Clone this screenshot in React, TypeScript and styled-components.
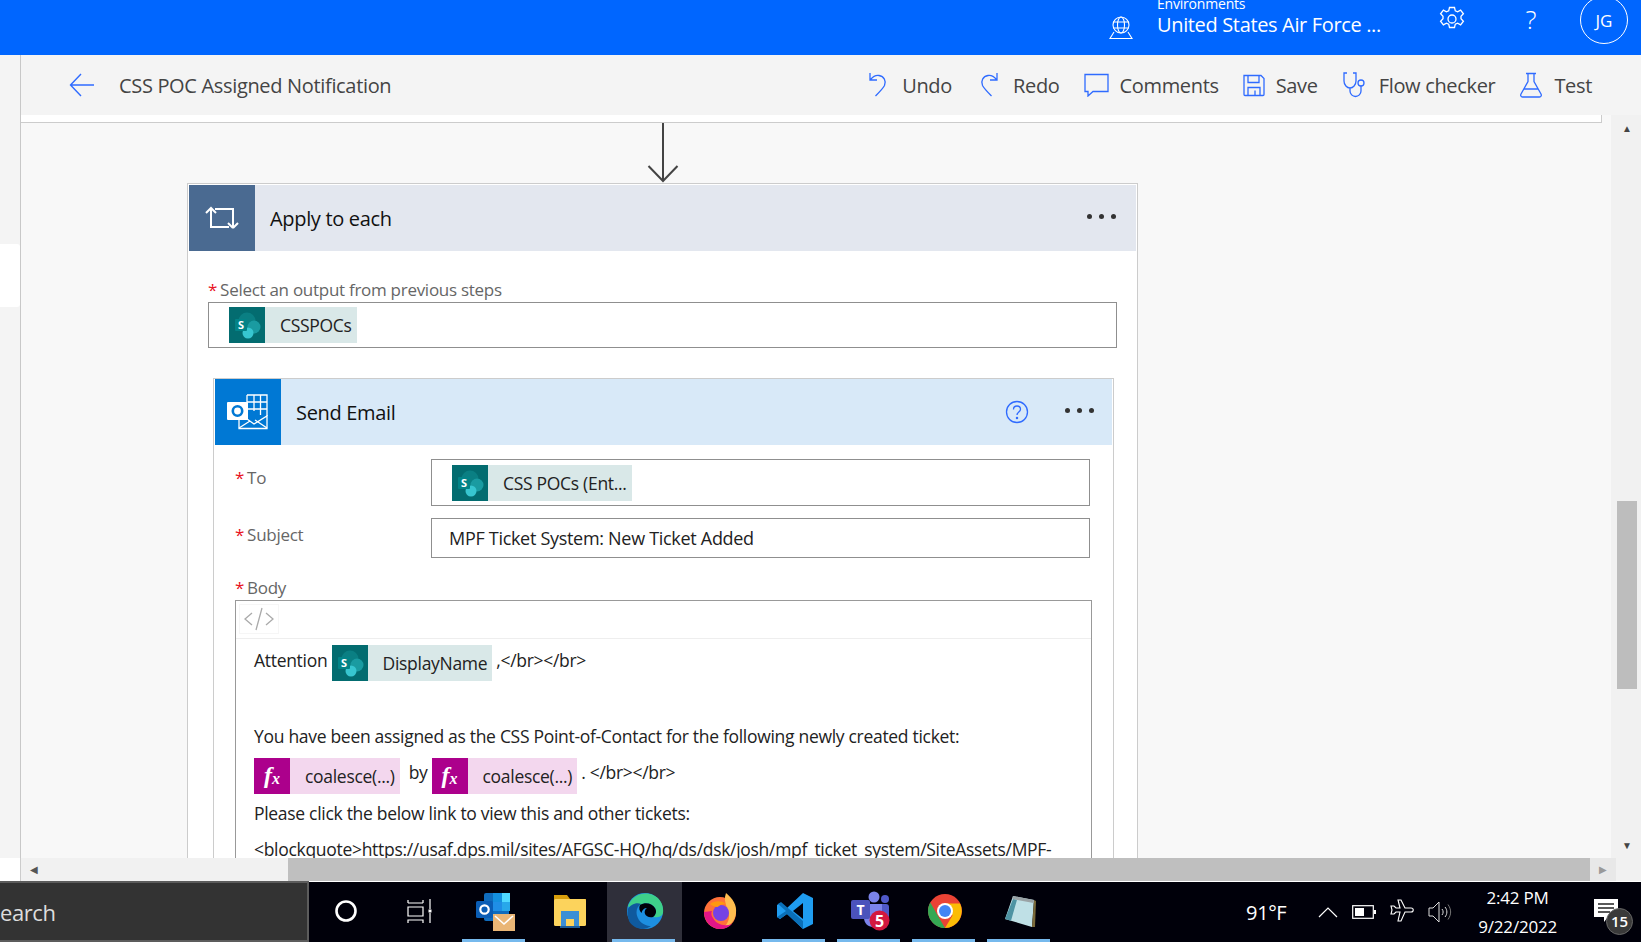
import React from 'react';
import styled, { createGlobalStyle } from 'styled-components';

const GlobalStyle = createGlobalStyle`
  html, body {
    margin: 0;
    padding: 0;
    overflow: hidden;
  }
  body {
    font-family: "Open Sans", "Noto Sans", sans-serif;
  }
  * {
    box-sizing: border-box;
  }
`;

const SharePointIcon = () => (
  <svg width="36" height="36" viewBox="0 0 36 36">
    <rect width="36" height="36" fill="#036c70" />
    <circle cx="18" cy="14" r="8.5" fill="#0a7f83" />
    <circle cx="25" cy="20" r="6.5" fill="#1a9ba1" />
    <circle cx="19" cy="26" r="5.5" fill="#37c6d0" />
    <rect x="6" y="12" width="12" height="12" rx="1" fill="#038387" />
    <text x="9" y="22" fontSize="11" fontWeight="700" fill="#fff" fontFamily="Open Sans">S</text>
  </svg>
);

const FxIcon = () => (
  <FxBox>
    f<sub>x</sub>
  </FxBox>
);

const TokenBox = ({ kind, children, wide }: { kind: 'sp' | 'fx'; children: React.ReactNode; wide?: boolean }) => (
  <Token $kind={kind}>
    {kind === 'sp' ? <SharePointIcon /> : <FxIcon />}
    <TokenLabel $wide={wide}>{children}</TokenLabel>
  </Token>
);

const Stroke = ({ w = 26, h = 26, children, view = '0 0 26 26' }: { w?: number; h?: number; view?: string; children: React.ReactNode }) => (
  <svg width={w} height={h} viewBox={view} fill="none" stroke="#2f6bff" strokeWidth="1.3">
    {children}
  </svg>
);

const toolbarItems: { label: string; icon: React.ReactNode }[] = [
  {
    label: 'Undo',
    icon: (
      <Stroke>
        <path d="M5 1v7h7M5.5 7.5C8 4.500 11 3 14 3.500c5 .8 7.500 5.500 5.500 10-1.500 3-6 7.500-9 10.500" />
      </Stroke>
    ),
  },
  {
    label: 'Redo',
    icon: (
      <Stroke>
        <path d="M21 1v7h-7M20.500 7.500C18 4.500 15 3 12 3.500c-5 .8-7.500 5.500-5.500 10 1.500 3 6 7.500 9 10.500" />
      </Stroke>
    ),
  },
  {
    label: 'Comments',
    icon: (
      <Stroke w={25} h={24} view="0 0 25 24">
        <path d="M1 1.500h23v17H9l-5 4.500v-4.500H1z" />
      </Stroke>
    ),
  },
  {
    label: 'Save',
    icon: (
      <Stroke w={22} h={23} view="0 0 22 23">
        <path d="M1 1.500h17l3 3v16a1 1 0 0 1-1 1H2a1 1 0 0 1-1-1zM5 1.500v7h11v-7M5 21.500v-8h12v8M12 16.500v5" />
      </Stroke>
    ),
  },
  {
    label: 'Flow checker',
    icon: (
      <Stroke w={26} h={26}>
        <path d="M5 1H2v8c0 4 3 7 6 7s6-3 6-7V1h-3M8 16v3c0 3 2.500 5.500 5.500 5.500S19 22 19 19v-5" />
        <circle cx="19" cy="11" r="3" />
      </Stroke>
    ),
  },
  {
    label: 'Test',
    icon: (
      <Stroke w={24} h={26} view="0 0 24 26">
        <path d="M7 1.500h10M9 1.500v8L2 22c-.8 1.500 0 3 1.500 3h17c1.500 0 2.300-1.500 1.500-3L15 9.500v-8M5 17h14" />
      </Stroke>
    ),
  },
];

const taskApps: { key: string; active?: boolean; lit?: boolean; icon: React.ReactNode }[] = [
  {
    key: 'cortana',
    icon: (
      <svg width="24" height="24" viewBox="0 0 24 24">
        <circle cx="12" cy="12" r="9.500" fill="none" stroke="#fff" strokeWidth="2.600" />
      </svg>
    ),
  },
  {
    key: 'taskview',
    icon: (
      <svg width="26" height="24" viewBox="0 0 26 24" fill="none" stroke="#fff" strokeWidth="1.200">
        <path d="M1 4V1M16 1v3M1 4h15M1 8h15v9H1zM1 24v-3h15v3M23 0v10M23 14v10" />
        <rect x="21.500" y="10.500" width="3" height="3" fill="#fff" stroke="none" />
      </svg>
    ),
  },
  {
    key: 'outlook',
    lit: true,
    icon: (
      <svg width="40" height="40" viewBox="0 0 40 40">
        <rect x="9" y="2" width="25" height="28" rx="2" fill="#0f6cbd" />
        <rect x="18" y="2" width="9" height="9" fill="#1490df" />
        <rect x="27" y="2" width="8" height="9" fill="#50d9ff" />
        <rect x="18" y="11" width="9" height="9" fill="#1f8ee6" />
        <rect x="27" y="11" width="8" height="9" fill="#28a8ea" />
        <rect x="1" y="10" width="17" height="17" rx="1.500" fill="#0a5db5" />
        <circle cx="9.500" cy="18.500" r="4.200" fill="none" stroke="#fff" strokeWidth="2.200" />
        <rect x="18" y="23" width="22" height="17" fill="#eab676" />
        <path d="M20 25l9 8 9-8" fill="none" stroke="#fff" strokeWidth="1.600" />
      </svg>
    ),
  },
  {
    key: 'explorer',
    icon: (
      <svg width="34" height="36" viewBox="0 0 34 36">
        <path d="M1 2h13l3 4h16v26H1z" fill="#d89e0c" />
        <rect x="1" y="6" width="32" height="27" rx="1.500" fill="#fcd35c" />
        <path d="M8 18h18v15h-5v-7h-8v7H8z" fill="#3b8fd6" />
        <rect x="7" y="33" width="20" height="2" fill="#1c5c96" />
      </svg>
    ),
  },
  {
    key: 'edge',
    active: true,
    lit: true,
    icon: (
      <svg width="38" height="38" viewBox="0 0 38 38">
        <circle cx="19" cy="19" r="18" fill="#1d8fe0" />
        <path d="M2 14C6 3 18-1 27 3c7 3 11 10 10 18-1 4-6 5-10 4 3-2 4-6 2-9-3-5-10-6-15-3-5 2-9 5-12 1z" fill="#3ed08a" />
        <path d="M2 17c2-4 8-7 13-5-5 3-6 10-2 16 3 4 8 6 12 6-8 6-18 2-22-5-1-4-2-8-1-12z" fill="#0f5a9e" />
        <path d="M14 13c5-3 12-2 15 3 2 3 1 7-2 9-4 1-7-1-8-3-1-2 0-5 2-6-3 0-5 2-5.500 5-2-2-3-5-1.500-8z" fill="#000008" />
      </svg>
    ),
  },
  {
    key: 'firefox',
    icon: (
      <svg width="36" height="38" viewBox="0 0 36 38">
        <circle cx="18" cy="21" r="16" fill="#ff7139" />
        <path d="M24 1c7 6 11 12 10 20-1 8-6 13-13 15 6-5 8-12 4-20-2-5-3-10-1-15z" fill="#ffbd4f" />
        <path d="M2 20c0 9 7 17 16 17 5 0 9-2 12-5-8 3-16 0-19-6-2-3-2-5-1-7z" fill="#e31587" />
        <circle cx="19" cy="21" r="8" fill="#7542e5" />
        <path d="M8 12c4-3 11-4 16 0-3 0-7 1-8 3-3 0-6-1-8-3z" fill="#ff980e" />
      </svg>
    ),
  },
  {
    key: 'vscode',
    lit: true,
    icon: (
      <svg width="38" height="38" viewBox="0 0 38 38">
        <path d="M27 1l10 5v26l-10 5-16-15-7 5-3-2v-12l3-2 7 5zM27 11l-10 8 10 8z" fill="#1f9cf0" fillRule="evenodd" />
        <path d="M2 12l3-2 22 19v8L11 22l-7 5-3-2 9-6z" fill="#0a6fb8" />
      </svg>
    ),
  },
  {
    key: 'teams',
    lit: true,
    icon: (
      <svg width="40" height="40" viewBox="0 0 40 40">
        <circle cx="24" cy="6" r="5.500" fill="#7b83eb" />
        <circle cx="35" cy="8" r="4" fill="#5059c9" />
        <rect x="24" y="13" width="15" height="15" rx="3" fill="#5059c9" />
        <path d="M14 13h18v14c0 6-4 9-9 9s-9-4-9-9z" fill="#7b83eb" />
        <rect x="1" y="9" width="19" height="19" rx="2" fill="#4b53bc" />
        <text x="10.500" y="24" fontSize="14" fontWeight="700" fill="#fff" textAnchor="middle" fontFamily="Open Sans">T</text>
        <circle cx="29.500" cy="29.500" r="10" fill="#d3183f" />
        <text x="29.500" y="35.500" fontSize="16" fontWeight="700" fill="#fff" textAnchor="middle" fontFamily="Open Sans">5</text>
      </svg>
    ),
  },
  {
    key: 'chrome',
    lit: true,
    icon: (
      <svg width="34" height="34" viewBox="0 0 34 34">
        <circle cx="17" cy="17" r="17" fill="#ea4335" />
        <path d="M2.300 8.500L10 22l7 12a17 17 0 0 1-14.700-25.500z" fill="#34a853" />
        <path d="M17 9.500h15a17 17 0 0 1-15 24.500l7.500-12.500z" fill="#fbbc05" />
        <circle cx="17" cy="17" r="8" fill="#fff" />
        <circle cx="17" cy="17" r="6" fill="#4285f4" />
      </svg>
    ),
  },
  {
    key: 'notes',
    lit: true,
    icon: (
      <svg width="34" height="34" viewBox="0 0 34 34">
        <path d="M10 2l21 4-2 27-27-8z" fill="#bfe0e6" />
        <path d="M2 25l8-20 4 .800-6 21z" fill="#4e93a3" />
        <path d="M29 33l2-27 2 1-1 26z" fill="#7a6a3a" />
        <path d="M10 2l21 4-.500 3-21-4z" fill="#9aa3a6" />
      </svg>
    ),
  },
];

export default function App() {
  return (
    <Page>
      <GlobalStyle />
      <TopBar>
        <svg width="24" height="24" viewBox="0 0 24 24" fill="none" stroke="#fff" strokeWidth="1.100">
          <circle cx="12" cy="9" r="8" />
          <ellipse cx="12" cy="9" rx="3.500" ry="8" />
          <path d="M4 6h16M4 12h16M5 16L1 22.500h22L19 16" />
        </svg>
        <EnvBlock>
          <EnvSmall>Environments</EnvSmall>
          <EnvName>United States Air Force ...</EnvName>
        </EnvBlock>
        <TopIcon>
          <svg width="26" height="26" viewBox="0 0 26 26" fill="none" stroke="#fff" strokeWidth="1.300">
            <path d="M10.500 1.500h5l.8 3.300 2.300 1 3-1.700 2.800 3.700-2.400 2.400v2.600l2.400 2.400-2.800 3.700-3-1.700-2.300 1-.8 3.300h-5l-.8-3.300-2.300-1-3 1.700-2.800-3.700 2.400-2.400v-2.600L1.600 7.800l2.800-3.700 3 1.700 2.300-1z" />
            <circle cx="13" cy="13" r="4" />
          </svg>
        </TopIcon>
        <HelpMark>?</HelpMark>
        <Avatar>JG</Avatar>
      </TopBar>

      <Middle>
        <SideStrip>
          <SideBlock />
        </SideStrip>
        <Workspace>
          <Toolbar>
            <BackGroup>
              <svg width="26" height="24" viewBox="0 0 26 24" fill="none" stroke="#2f6bff" strokeWidth="1.400">
                <path d="M25 12H2M12 1L1.500 12 12 23" />
              </svg>
              <FlowTitle>CSS POC Assigned Notification</FlowTitle>
            </BackGroup>
            <Actions>
              {toolbarItems.map((item) => (
                <Action key={item.label}>
                  {item.icon}
                  <span>{item.label}</span>
                </Action>
              ))}
            </Actions>
          </Toolbar>

          <Viewport>
            <Canvas>
              <TopStrip />
              <FlowColumn>
                <Connector>
                  <svg width="32" height="60" viewBox="0 0 32 60" fill="none" stroke="#444" strokeWidth="2">
                    <path d="M16 0v58M1.500 43L16 58 30.500 43" />
                  </svg>
                </Connector>
                <ApplyCard>
                  <CardHeader $bg="#e3e7ef">
                    <CardIcon $bg="#4a6a91">
                      <svg width="34" height="24" viewBox="0 0 34 24" fill="none" stroke="#fff" strokeWidth="2">
                        <path d="M1 7l5-5 5 5M6 2.500V21h18M28 22l5-5M28 22l-5-5M28 21V3H10" />
                      </svg>
                    </CardIcon>
                    <CardTitle>Apply to each</CardTitle>
                    <Dots />
                  </CardHeader>
                  <ApplyBody>
                    <FieldLabel>
                      <Req>*</Req>Select an output from previous steps
                    </FieldLabel>
                    <InputBox $height={46} $padLeft={20}>
                      <TokenBox kind="sp">CSSPOCs</TokenBox>
                    </InputBox>

                    <SendCard>
                      <CardHeader $bg="#d8e9f8">
                        <CardIcon $bg="#0078d4">
                          <svg width="42" height="38" viewBox="0 0 42 38" fill="none" stroke="#fff" strokeWidth="1.300">
                            <path d="M20 2h20v21M20 2v14M27 2v16M33.500 2v20M20 9h20M20 16h20" />
                            <path d="M12 26v9.500h28V23L27 31l-7-5" />
                            <path d="M12 35l11-7M40 35l-12-8" />
                            <rect x="0" y="9" width="21" height="18" rx="1" fill="#fff" stroke="none" />
                            <circle cx="10.500" cy="18" r="4.700" stroke="#0078d4" strokeWidth="2.600" />
                          </svg>
                        </CardIcon>
                        <CardTitle>Send Email</CardTitle>
                        <svg width="24" height="24" viewBox="0 0 24 24" fill="none" stroke="#2f6bff" strokeWidth="1.300">
                          <circle cx="12" cy="12" r="10.500" />
                          <path d="M8.500 9.500c0-2.200 1.600-3.500 3.500-3.500s3.500 1.300 3.500 3.200c0 2.800-3.500 2.800-3.500 5.800" />
                          <circle cx="12" cy="18" r=".6" fill="#2f6bff" />
                        </svg>
                        <Dots $gapLeft={36} $marginRight={18} />
                      </CardHeader>

                      <FormRow $top={14}>
                        <RowLabel $pad={6}>
                          <Req>*</Req>To
                        </RowLabel>
                        <InputBox $height={47} $padLeft={20}>
                          <TokenBox kind="sp">CSS POCs (Ent...</TokenBox>
                        </InputBox>
                      </FormRow>
                      <FormRow $top={12}>
                        <RowLabel $pad={4}>
                          <Req>*</Req>Subject
                        </RowLabel>
                        <InputBox $height={40} $padLeft={17}>
                          <PlainValue>MPF Ticket System: New Ticket Added</PlainValue>
                        </InputBox>
                      </FormRow>

                      <BodyField>
                        <FieldLabel>
                          <Req>*</Req>Body
                        </FieldLabel>
                        <BodyBox>
                          <EditorBar>
                            <CodeButton>
                              <svg width="30" height="24" viewBox="0 0 30 24" fill="none" stroke="#aaa" strokeWidth="1.300">
                                <path d="M8 6L1 12l7 6M22 6l7 6-7 6M18 1l-6 22" />
                              </svg>
                            </CodeButton>
                          </EditorBar>
                          <BodyText>
                            <TextRow $top={6}>
                              <Words>Attention&nbsp;</Words>
                              <TokenBox kind="sp" wide>DisplayName</TokenBox>
                              <Words $left={4}>,&lt;/br&gt;&lt;/br&gt;</Words>
                            </TextRow>
                            <TextRow $top={40}>
                              <Words>You have been assigned as the CSS Point-of-Contact for the following newly created ticket:</Words>
                            </TextRow>
                            <TextRow $top={7}>
                              <TokenBox kind="fx" wide>coalesce(...)</TokenBox>
                              <Words $left={9} $height={28}>by</Words>
                              <Spacer />
                              <TokenBox kind="fx" wide>coalesce(...)</TokenBox>
                              <Words $left={4} $height={28}>. &lt;/br&gt;&lt;/br&gt;</Words>
                            </TextRow>
                            <TextRow $top={4}>
                              <Words>Please click the below link to view this and other tickets:</Words>
                            </TextRow>
                            <TextRow $top={6}>
                              <Words>&lt;blockquote&gt;https://usaf.dps.mil/sites/AFGSC-HQ/hq/ds/dsk/josh/mpf_ticket_system/SiteAssets/MPF-</Words>
                            </TextRow>
                          </BodyText>
                        </BodyBox>
                      </BodyField>
                    </SendCard>
                  </ApplyBody>
                </ApplyCard>
              </FlowColumn>
            </Canvas>
            <VScroll>
              <ScrollArrow>▲</ScrollArrow>
              <VThumbTrack>
                <VThumb />
              </VThumbTrack>
              <ScrollArrow>▼</ScrollArrow>
            </VScroll>
          </Viewport>
        </Workspace>
      </Middle>

      <HScroll>
        <HCorner />
        <HTrack>
          <HArrow>◀</HArrow>
          <HThumb />
          <HArrow>▶</HArrow>
        </HTrack>
        <HEnd />
      </HScroll>

      <Taskbar>
        <SearchBox>earch</SearchBox>
        {taskApps.map((app, index) => (
          <TaskCell key={app.key} $active={app.active} $lit={app.lit} $narrow={index < 2}>
            {app.icon}
          </TaskCell>
        ))}
        <Tray>
          <Temp>91°F</Temp>
          <svg width="20" height="12" viewBox="0 0 20 12" fill="none" stroke="#fff" strokeWidth="1.200">
            <path d="M1 11l9-9 9 9" />
          </svg>
          <svg width="24" height="14" viewBox="0 0 24 14">
            <rect x=".7" y=".7" width="20.600" height="12.600" fill="none" stroke="#fff" strokeWidth="1.200" />
            <rect x="3" y="3" width="9" height="8" fill="#fff" />
            <rect x="22" y="5" width="2" height="4" fill="#fff" />
          </svg>
          <svg width="24" height="26" viewBox="0 0 24 26" fill="none" stroke="#fff" strokeWidth="1.100">
            <path d="M8 1h3l4 8h6c3 0 3 4 0 4h-6l-4 9H8l2-9H6l-2 2H1l1-4-1-4h3l2 2h4z" />
          </svg>
          <svg width="24" height="22" viewBox="0 0 24 22" fill="none" stroke="#ddd" strokeWidth="1">
            <path d="M1 7h4l6-6v20l-6-6H1z" />
            <path d="M14 8c1.500 2 1.500 4 0 6M17 6c2.500 3 2.500 7 0 10" />
            <path d="M20 3.500c3.500 5 3.500 10 0 15" stroke="#777" />
          </svg>
          <Clock>
            <span>2:42 PM</span>
            <span>9/22/2022</span>
          </Clock>
          <Notify>
            <svg width="25" height="25" viewBox="0 0 25 25">
              <path d="M0 0h24v18H14l-4 5v-5H0z" fill="#fff" />
              <path d="M4 5h16M4 9h16M4 13h12" stroke="#222" strokeWidth="1.300" />
            </svg>
            <NotifyBadge>15</NotifyBadge>
          </Notify>
        </Tray>
      </Taskbar>
    </Page>
  );
}

const Page = styled.div`
  width: 1641px;
  height: 942px;
  display: flex;
  flex-direction: column;
  overflow: hidden;
  background: #fff;
`;

const TopBar = styled.header`
  height: 55px;
  flex: none;
  background: #0066ff;
  color: #fff;
  display: flex;
  align-items: center;
  padding-right: 13px;
  justify-content: flex-end;
  overflow: hidden;
`;

const EnvBlock = styled.div`
  margin: 0 0 0 24px;
  width: 282px;
  display: flex;
  flex-direction: column;
  line-height: 1;
  align-self: flex-start;
  margin-top: -4px;
`;

const EnvSmall = styled.span`
  font-size: 14px;
  line-height: 15px;
  letter-spacing: -0.2px;
`;

const EnvName = styled.span`
  font-size: 20px;
  line-height: 28px;
  letter-spacing: -0.35px;
`;

const TopIcon = styled.div`
  width: 26px;
  height: 26px;
  margin-right: 56px;
  margin-bottom: 17px;
`;

const HelpMark = styled.div`
  width: 20px;
  font-size: 26px;
  font-weight: 300;
  text-align: center;
  margin-bottom: 18px;
  margin-right: 39px;
  line-height: 30px;
`;

const Avatar = styled.div`
  width: 48px;
  height: 48px;
  flex: none;
  border: 1px solid #fff;
  border-radius: 50%;
  font-size: 17px;
  display: flex;
  align-items: center;
  justify-content: center;
  align-self: flex-start;
  margin-top: -4px;
`;

const Middle = styled.div`
  flex: 1;
  min-height: 0;
  display: flex;
`;

const SideStrip = styled.div`
  width: 21px;
  flex: none;
  background: #f4f4f4;
  border-right: 1px solid #c8c8c8;
  padding-top: 189px;
`;

const SideBlock = styled.div`
  height: 63px;
  background: #fff;
  border-radius: 0 3px 3px 0;
`;

const Workspace = styled.div`
  flex: 1;
  min-width: 0;
  display: flex;
  flex-direction: column;
`;

const Toolbar = styled.div`
  height: 60px;
  flex: none;
  background: #f4f4f4;
  display: flex;
  align-items: center;
  justify-content: space-between;
  padding: 0 49px 0 48px;
  color: #444;
`;

const BackGroup = styled.div`
  display: flex;
  align-items: center;
  gap: 24px;
`;

const FlowTitle = styled.div`
  font-size: 20px;
  letter-spacing: -0.33px;
  color: #444;
`;

const Actions = styled.div`
  display: flex;
  align-items: center;
  gap: 24px;
`;

const Action = styled.div`
  display: flex;
  align-items: center;
  gap: 11px;
  font-size: 20px;
  letter-spacing: -0.33px;
  color: #444;
`;

const Viewport = styled.div`
  flex: 1;
  min-height: 0;
  display: flex;
`;

const Canvas = styled.div`
  flex: 1;
  min-width: 0;
  background: #f8f8f8;
  overflow: hidden;
`;

const TopStrip = styled.div`
  height: 8px;
  background: #fff;
  border-bottom: 1px solid #ccc;
  border-right: 1px solid #ccc;
  margin-right: 9px;
`;

const FlowColumn = styled.div`
  width: 951px;
  margin-left: 166px;
`;

const Connector = styled.div`
  height: 60px;
  display: flex;
  justify-content: center;
`;

const ApplyCard = styled.section`
  background: #fff;
  border: 1px solid #ccc;
  padding: 1px;
`;

const CardHeader = styled.div<{ $bg: string }>`
  height: 66px;
  background: ${(p) => p.$bg};
  display: flex;
  align-items: center;
`;

const CardIcon = styled.div<{ $bg: string }>`
  width: 66px;
  height: 66px;
  flex: none;
  background: ${(p) => p.$bg};
  display: flex;
  align-items: center;
  justify-content: center;
`;

const CardTitle = styled.div`
  flex: 1;
  padding-left: 15px;
  font-size: 20px;
  letter-spacing: -0.33px;
  color: #111;
`;

const Dots = styled.div<{ $gapLeft?: number; $marginRight?: number }>`
  width: 5px;
  height: 5px;
  border-radius: 50%;
  background: #333;
  box-shadow: 12px 0 #333, 24px 0 #333;
  margin-left: ${(p) => p.$gapLeft ?? 0}px;
  margin-right: ${(p) => (p.$marginRight ?? 20) + 24}px;
  margin-top: -4px;
`;

const ApplyBody = styled.div`
  padding: 26px 19px 0;
`;

const FieldLabel = styled.div`
  font-size: 17px;
  letter-spacing: -0.28px;
  line-height: 25px;
  color: #666;
`;

const Req = styled.span`
  color: #e81123;
  margin-right: 3px;
`;

const InputBox = styled.div<{ $height: number; $padLeft: number }>`
  flex: 1;
  height: ${(p) => p.$height}px;
  border: 1px solid #8f8f8f;
  background: #fff;
  display: flex;
  align-items: center;
  padding-left: ${(p) => p.$padLeft}px;
`;

const Token = styled.span<{ $kind: 'sp' | 'fx' }>`
  display: inline-flex;
  height: 36px;
  align-items: center;
  flex: none;
  background: ${(p) => (p.$kind === 'sp' ? '#d9e8e8' : '#f3d7ee')};
  color: #222;
`;

const TokenLabel = styled.span<{ $wide?: boolean }>`
  font-size: 17.5px;
  letter-spacing: -0.3px;
  padding-left: ${(p) => (p.$wide ? 15 : 15)}px;
  padding-right: 5px;
`;

const FxBox = styled.span`
  width: 36px;
  height: 36px;
  flex: none;
  background: #ac008c;
  color: #fff;
  font-family: "Liberation Serif", serif;
  font-style: italic;
  font-weight: 700;
  font-size: 24px;
  line-height: 34px;
  text-align: center;

  sub {
    font-size: 16px;
    vertical-align: -1px;
    line-height: 0;
  }
`;

const SendCard = styled.section`
  margin: 30px 3px 0 5px;
  border: 1px solid #ccc;
  border-bottom: none;
  padding: 0 1px;
`;

const FormRow = styled.div<{ $top: number }>`
  display: flex;
  align-items: flex-start;
  margin-top: ${(p) => p.$top}px;
  padding: 0 22px 0 20px;
`;

const RowLabel = styled.div<{ $pad: number }>`
  width: 196px;
  flex: none;
  font-size: 17px;
  letter-spacing: -0.28px;
  line-height: 25px;
  color: #666;
  padding-top: ${(p) => p.$pad}px;
`;

const PlainValue = styled.span`
  font-size: 18px;
  letter-spacing: -0.3px;
  color: #222;
`;

const BodyField = styled.div`
  margin-top: 17px;
  padding: 0 20px;
`;

const BodyBox = styled.div`
  border: 1px solid #999;
  height: 400px;
`;

const EditorBar = styled.div`
  height: 38px;
  border-bottom: 1px solid #eee;
  padding: 3px;
`;

const CodeButton = styled.div`
  width: 40px;
  height: 30px;
  border: 1px solid #f6f6f6;
  display: flex;
  align-items: center;
  justify-content: center;
`;

const BodyText = styled.div`
  padding: 0 18px;
  color: #222;
`;

const TextRow = styled.div<{ $top: number }>`
  display: flex;
  align-items: flex-start;
  margin-top: ${(p) => p.$top}px;
  white-space: nowrap;
`;

const Words = styled.span<{ $left?: number; $height?: number }>`
  font-size: 17.5px;
  letter-spacing: -0.3px;
  line-height: ${(p) => p.$height ?? 30}px;
  margin-left: ${(p) => p.$left ?? 0}px;
`;

const Spacer = styled.span`
  width: 4px;
`;

const VScroll = styled.div`
  width: 30px;
  flex: none;
  background: #f1f1f1;
  display: flex;
  flex-direction: column;
  padding: 0 4px 0 6px;
`;

const ScrollArrow = styled.div`
  height: 26px;
  font-size: 10px;
  line-height: 26px;
  text-align: center;
  color: #444;
  flex: none;
`;

const VThumbTrack = styled.div`
  flex: 1;
  padding-top: 360px;
`;

const VThumb = styled.div`
  height: 188px;
  background: #bdbdbd;
`;

const HScroll = styled.div`
  height: 23px;
  flex: none;
  display: flex;
`;

const HCorner = styled.div`
  width: 21px;
  background: #fff;
  border-right: 1px solid #ccc;
`;

const HTrack = styled.div`
  flex: 1;
  background: #f1f1f1;
  display: flex;
  align-items: stretch;
`;

const HArrow = styled.div`
  width: 26px;
  font-size: 10px;
  line-height: 23px;
  text-align: center;
  color: #555;
  flex: none;
  &:last-child {
    color: #999;
    background: #e8e8e8;
  }
`;

const HThumb = styled.div`
  flex: 1;
  margin-left: 241px;
  background: #bfbfbf;
`;

const HEnd = styled.div`
  width: 25px;
  background: #f1f1f1;
`;

const Taskbar = styled.footer`
  height: 61px;
  flex: none;
  background: #00000a;
  border-top: 1px solid #fff;
  display: flex;
  color: #fff;
`;

const SearchBox = styled.div`
  width: 309px;
  flex: none;
  background: #333;
  border: 2px solid #5c5c5c;
  border-left: none;
  font-size: 22px;
  letter-spacing: -0.4px;
  color: #ddd;
  display: flex;
  align-items: center;
  margin-top: -1px;
`;

const TaskCell = styled.div<{ $active?: boolean; $lit?: boolean; $narrow?: boolean }>`
  width: ${(p) => (p.$narrow ? 74 : 75)}px;
  flex: none;
  display: flex;
  align-items: center;
  justify-content: center;
  background: ${(p) => (p.$active ? '#2f2f3a' : 'transparent')};
  border-bottom: 3px solid transparent;
  border-image: ${(p) => (p.$lit ? 'linear-gradient(to right, transparent 6px, #76b9ed 6px, #76b9ed calc(100% - 8px), transparent calc(100% - 8px)) 1' : 'none')};
`;

const Tray = styled.div`
  margin-left: auto;
  display: flex;
  align-items: center;
  gap: 14px;
  padding-right: 22px;
`;

const Temp = styled.div`
  font-size: 20px;
  letter-spacing: -0.4px;
  margin-right: 18px;
`;

const Clock = styled.div`
  display: flex;
  flex-direction: column;
  align-items: center;
  font-size: 17px;
  line-height: 29px;
  letter-spacing: -0.2px;
  margin: 0 23px 0 12px;
`;

const Notify = styled.div`
  position: relative;
  width: 25px;
  height: 25px;
  margin-top: -2px;
`;

const NotifyBadge = styled.span`
  position: absolute;
  left: 12px;
  top: 9px;
  width: 27px;
  height: 27px;
  border-radius: 50%;
  background: #3a3a3a;
  border: 1px solid #666;
  font-size: 15px;
  font-weight: 600;
  display: flex;
  align-items: center;
  justify-content: center;
`;
